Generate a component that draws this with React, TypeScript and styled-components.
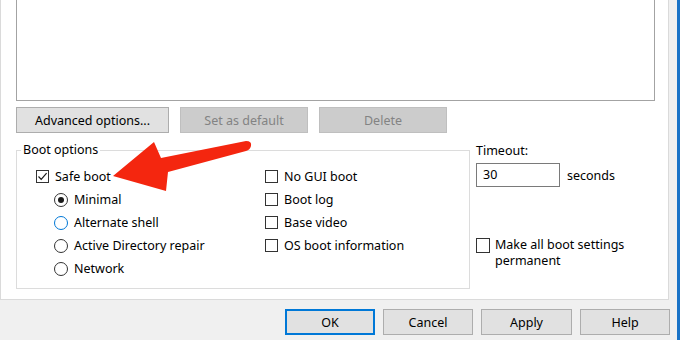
import styled, { createGlobalStyle } from "styled-components";

const GlobalStyle = createGlobalStyle`
  html, body {
    margin: 0;
    padding: 0;
    background: #f0f0f0;
  }
  * {
    box-sizing: border-box;
  }
`;

const safeModes = [
  { label: "Minimal", checked: true },
  { label: "Alternate shell", hover: true },
  { label: "Active Directory repair" },
  { label: "Network" },
];

const extraOptions = ["No GUI boot", "Boot log", "Base video", "OS boot information"];

function Check({ checked }: { checked?: boolean }) {
  return (
    <CheckBox>
      {checked && (
        <svg width="11" height="11" viewBox="0 0 11 11">
          <path d="M1.5 5.5 L4.2 8.3 L9.6 2.2" fill="none" stroke="#1a1a1a" strokeWidth="1.2" />
        </svg>
      )}
    </CheckBox>
  );
}

export default function App() {
  return (
    <Window>
      <GlobalStyle />
      <Main>
        <TabPanel>
          <ListBox />
          <ButtonRow>
            <Button $w={153}>Advanced options...</Button>
            <Button $w={128} disabled>
              Set as default
            </Button>
            <Button $w={128} disabled>
              Delete
            </Button>
          </ButtonRow>

          <Lower>
            <Group>
              <Legend>Boot options</Legend>
              <GroupBody>
                <Column $w={229}>
                  <Row>
                    <Check checked />
                    <Label>Safe boot</Label>
                  </Row>
                  {safeModes.map((m) => (
                    <Row key={m.label} $indent>
                      <Radio $hover={m.hover}>{m.checked && <Dot />}</Radio>
                      <Label>{m.label}</Label>
                    </Row>
                  ))}
                </Column>
                <Column>
                  {extraOptions.map((o) => (
                    <Row key={o}>
                      <Check />
                      <Label>{o}</Label>
                    </Row>
                  ))}
                </Column>
              </GroupBody>
            </Group>

            <Side>
              <Label>Timeout:</Label>
              <TimeoutRow>
                <Input>30</Input>
                <Label>seconds</Label>
              </TimeoutRow>
              <PermanentRow>
                <Check />
                <WrapLabel>
                  Make all boot settings
                  <br />
                  permanent
                </WrapLabel>
              </PermanentRow>
            </Side>
          </Lower>
        </TabPanel>

        <Footer>
          <Button $w={90} $default>
            OK
          </Button>
          <Button $w={90}>Cancel</Button>
          <Button $w={91}>Apply</Button>
          <Button $w={90}>Help</Button>
        </Footer>
      </Main>
      <BlueEdge />

      <Arrow width="680" height="340" viewBox="0 0 680 340">
        <path
          d="M113 176 L154 142 L161 158 L246 141 Q252 141 251 146 Q250 150 246 151 L168 172 L166 191 Z"
          fill="#f4260f"
        />
      </Arrow>
    </Window>
  );
}

const Window = styled.div`
  position: relative;
  width: 680px;
  height: 340px;
  display: flex;
  overflow: hidden;
  font-family: "Noto Sans", "Open Sans", sans-serif;
  font-size: 12.5px;
  color: #000;
`;

const Main = styled.div`
  width: 677px;
  display: flex;
  flex-direction: column;
  background: #f0f0f0;
`;

const BlueEdge = styled.div`
  width: 3px;
  background: #1a73c7;
`;

const TabPanel = styled.div`
  width: 669px;
  height: 300px;
  background: #fff;
  border-left: 1px solid #dadada;
  border-right: 1px solid #dadada;
  border-bottom: 1px solid #dadada;
  padding-left: 15px;
`;

const ListBox = styled.div`
  width: 639px;
  height: 101px;
  border: 1px solid #a3a3a3;
  border-top: none;
  background: #fff;
`;

const ButtonRow = styled.div`
  display: flex;
  gap: 11px;
  margin-top: 6px;
`;

const Button = styled.button<{ $w: number; $default?: boolean }>`
  width: ${(p) => p.$w}px;
  height: 26px;
  padding: 0;
  font: inherit;
  color: #000;
  background: #e1e1e1;
  border: 1px solid ${(p) => (p.$default ? "#0078d7" : "#adadad")};
  box-shadow: ${(p) => (p.$default ? "inset 0 0 0 1px #0078d7" : "none")};
  &:disabled {
    background: #cccccc;
    border-color: #bfbfbf;
    color: #838383;
  }
`;

const Lower = styled.div`
  display: flex;
  gap: 6px;
  margin-top: 8px;
`;

const Group = styled.fieldset`
  width: 454px;
  min-width: 0;
  flex: none;
  height: 148px;
  margin: 0;
  padding: 0;
  border: 1px solid #dcdcdc;
`;

const Legend = styled.legend`
  margin-left: 4px;
  padding: 0 2px;
  line-height: 18px;
`;

const GroupBody = styled.div`
  display: flex;
  padding: 6px 0 0 19px;
`;

const Column = styled.div<{ $w?: number }>`
  display: flex;
  flex-direction: column;
  ${(p) => (p.$w ? `width: ${p.$w}px; flex: none;` : "flex: 1;")}
`;

const Row = styled.div<{ $indent?: boolean }>`
  display: flex;
  align-items: center;
  gap: 6px;
  height: 23px;
  padding-left: ${(p) => (p.$indent ? 18 : 0)}px;
`;

const Label = styled.span`
  line-height: 15px;
  white-space: nowrap;
`;

const WrapLabel = styled.span`
  line-height: 16px;
`;

const CheckBox = styled.span`
  width: 13px;
  height: 13px;
  flex: none;
  display: flex;
  align-items: center;
  justify-content: center;
  border: 1px solid #333;
  background: #fff;
`;

const Radio = styled.span<{ $hover?: boolean }>`
  width: 14px;
  height: 14px;
  flex: none;
  display: flex;
  align-items: center;
  justify-content: center;
  border-radius: 50%;
  border: 1px solid ${(p) => (p.$hover ? "#0078d7" : "#333")};
  background: #fff;
`;

const Dot = styled.span`
  width: 6px;
  height: 6px;
  border-radius: 50%;
  background: #1a1a1a;
`;

const Side = styled.div`
  display: flex;
  flex-direction: column;
  padding-top: 2px;
  flex: 1;
`;

const TimeoutRow = styled.div`
  display: flex;
  align-items: center;
  gap: 7px;
  margin-top: 5px;
`;

const Input = styled.div`
  width: 84px;
  height: 24px;
  border: 1px solid #7a7a7a;
  padding: 2px 0 0 6px;
  line-height: 18px;
`;

const PermanentRow = styled.div`
  display: flex;
  align-items: flex-start;
  gap: 5px;
  margin-top: 50px;
  ${CheckBox} {
    width: 14px;
    height: 15px;
    margin-top: 1px;
  }
`;

const Footer = styled.div`
  flex: 1;
  display: flex;
  justify-content: flex-end;
  align-items: flex-start;
  gap: 8px;
  padding: 9px 7px 0 0;
`;

const Arrow = styled.svg`
  position: absolute;
  left: 0;
  top: 0;
  pointer-events: none;
`;
